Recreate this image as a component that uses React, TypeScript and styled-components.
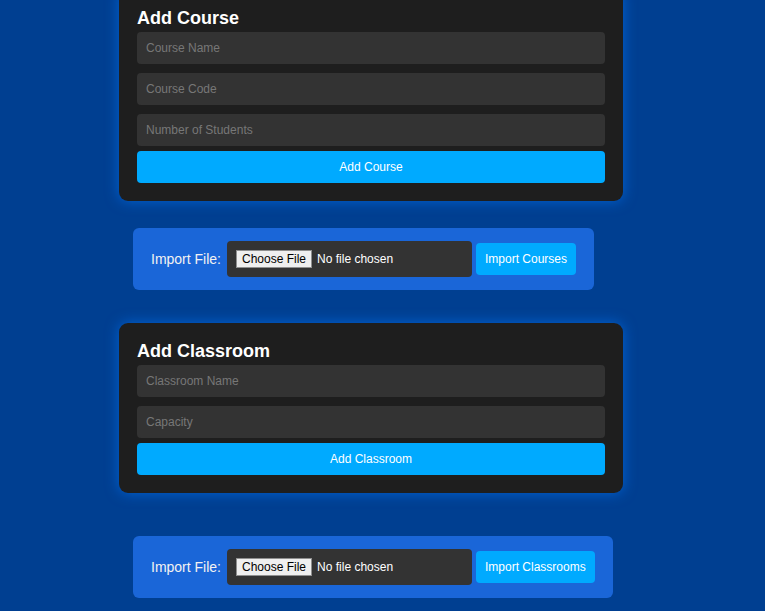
import React from "react";
import styled, { createGlobalStyle } from "styled-components";

const GlobalStyle = createGlobalStyle`
  html, body {
    margin: 0;
    padding: 0;
    height: 100%;
  }
  body {
    background: #003f91;
    font-family: "Liberation Sans", Arial, sans-serif;
    color: #ffffff;
    overflow: hidden;
  }
  #root {
    height: 100%;
  }
`;

const Page = styled.div`
  height: 100vh;
  display: flex;
  flex-direction: column;
  justify-content: center;
`;

const Column = styled.div`
  width: 527px;
  margin: 0 auto;
  display: flex;
  flex-direction: column;
  align-items: flex-start;
  padding-bottom: 23px;
`;

const Card = styled.section<{ $mt?: number }>`
  box-sizing: border-box;
  width: 504px;
  margin-top: ${(p) => p.$mt ?? 0}px;
  padding: 18px;
  background: #1e1e1e;
  border-radius: 9px;
  box-shadow: 0 0 14px rgba(0, 123, 255, 0.6);
  display: flex;
  flex-direction: column;
`;

const Title = styled.h2`
  margin: 0 0 3px;
  font-size: 18px;
  line-height: 21px;
  font-weight: 700;
  color: #ffffff;
`;

const TextInput = styled.input`
  box-sizing: border-box;
  width: 100%;
  height: 32px;
  margin: 0 0 9px;
  padding: 0 9px;
  border: none;
  border-radius: 4px;
  background: #333333;
  color: #ffffff;
  font-family: "Liberation Sans", Arial, sans-serif;
  font-size: 12px;
  outline: none;
  &:last-of-type {
    margin-bottom: 5px;
  }
  &::placeholder {
    color: #777777;
  }
`;

const PrimaryButton = styled.button`
  box-sizing: border-box;
  height: 32px;
  padding: 0 9px;
  border: none;
  border-radius: 4px;
  background: #00aaff;
  color: #ffffff;
  font-family: "Liberation Sans", Arial, sans-serif;
  font-size: 12px;
  cursor: pointer;
`;

const WideButton = styled(PrimaryButton)`
  width: 100%;
`;

const ImportPanel = styled.div<{ $mt: number }>`
  margin: ${(p) => p.$mt}px 0 0 14px;
  padding: 13px 18px;
  background: #1a66d8;
  border-radius: 6px;
  display: flex;
  align-items: center;
`;

const ImportLabel = styled.label`
  font-size: 14px;
  color: #f2f2f2;
  margin-right: 6px;
`;

const FileInput = styled.input`
  box-sizing: border-box;
  width: 245px;
  height: 36px;
  margin-right: 4px;
  padding: 9px;
  border: none;
  border-radius: 4px;
  background: #333333;
  color: #ffffff;
  font-family: "Liberation Sans", Arial, sans-serif;
  font-size: 12px;
  line-height: 14px;
  &::file-selector-button {
    box-sizing: border-box;
    height: 18px;
    margin: 0 5px 0 0;
    padding: 1px 5px;
    border: 1px solid #8f8f8f;
    border-radius: 0;
    background: #efefef;
    color: #000000;
    font-family: "Liberation Sans", Arial, sans-serif;
    font-size: 12px;
    line-height: 14px;
  }
`;

function AddForm({ title, fields, action, mt }: { title: string; fields: string[]; action: string; mt?: number }) {
  return (
    <Card $mt={mt}>
      <Title>{title}</Title>
      {fields.map((f) => (
        <TextInput key={f} placeholder={f} />
      ))}
      <WideButton>{action}</WideButton>
    </Card>
  );
}

function Importer({ action, mt }: { action: string; mt: number }) {
  return (
    <ImportPanel $mt={mt}>
      <ImportLabel>Import File:</ImportLabel>
      <FileInput type="file" />
      <PrimaryButton>{action}</PrimaryButton>
    </ImportPanel>
  );
}

export default function App() {
  return (
    <>
      <GlobalStyle />
      <Page>
        <Column>
          <AddForm title="Add Course" fields={["Course Name", "Course Code", "Number of Students"]} action="Add Course" />
          <Importer action="Import Courses" mt={27} />
          <AddForm title="Add Classroom" fields={["Classroom Name", "Capacity"]} action="Add Classroom" mt={33} />
          <Importer action="Import Classrooms" mt={43} />
        </Column>
      </Page>
    </>
  );
}
